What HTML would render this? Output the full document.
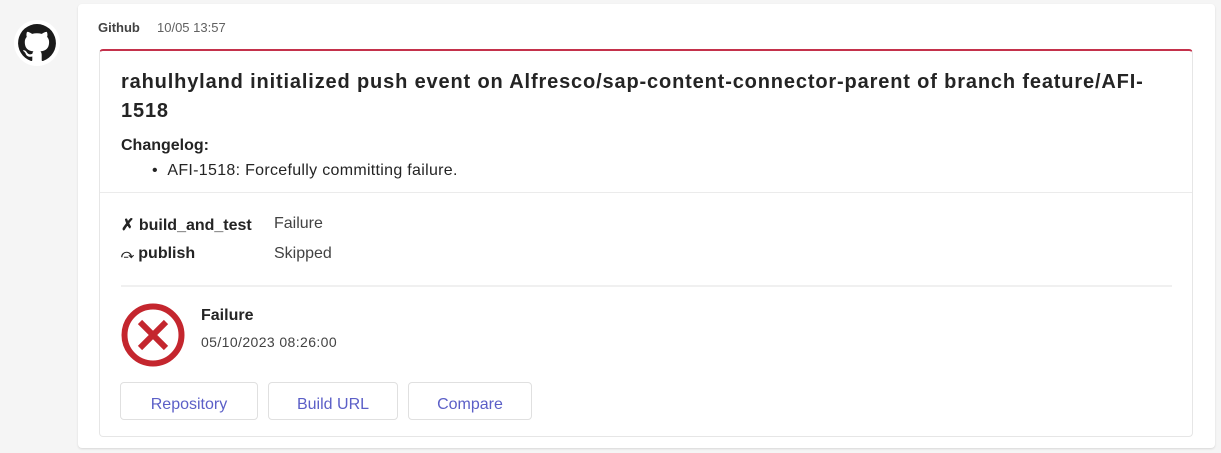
<!DOCTYPE html>
<html><head><style>
body{margin:0;width:1221px;height:453px;background:#f5f5f5;font-family:"Liberation Sans",sans-serif;position:relative;overflow:hidden;color:#242424}
.msg{position:absolute;left:78px;top:4px;width:1137px;height:444px;background:#fff;border-radius:4px;box-shadow:0 1px 2px rgba(0,0,0,.12)}
.card{position:absolute;left:99px;top:49px;width:1094px;height:388px;background:#fff;border:1px solid #e6e6e6;border-top:2px solid #c4314b;border-radius:4px;box-sizing:border-box}
.t{position:absolute;white-space:nowrap}
.btn{position:absolute;top:382px;height:38px;border:1px solid #e0e0e0;border-radius:4px;box-sizing:border-box;color:#5b5fc7;font-size:16px;text-align:center;line-height:43px;background:#fff}
</style></head><body>
<svg style="position:absolute;left:14px;top:20px" width="46" height="46" viewBox="0 0 46 46">
<circle cx="23" cy="23" r="23" fill="#fff"/>
<path fill="#1b1b1b" d="M23 4a19 19 0 0 0-6 37c1 .2 1.3-.4 1.3-1v-3.5c-5.3 1.2-6.4-2.3-6.4-2.3-.9-2.2-2.1-2.8-2.1-2.8-1.700-1.2.1-1.1.1-1.1 1.9.1 2.9 2 2.9 2 1.7 2.9 4.4 2 5.5 1.6.2-1.2.7-2 1.2-2.5-4.2-.5-8.7-2.1-8.7-9.4 0-2.1.7-3.8 2-5.1-.2-.5-.8-2.4.2-5 0 0 1.6-.5 5.2 2a18 18 0 0 1 9.5 0c3.6-2.5 5.2-2 5.2-2 1 2.6.4 4.5.2 5 1.2 1.3 2 3 2 5.1 0 7.3-4.5 8.9-8.700 9.4.7.6 1.3 1.8 1.3 3.5V40c0 .6.3 1.2 1.3 1A19 19 0 0 0 23 4z"/>
</svg>
<div class="msg"></div>
<div class="t" style="left:98px;top:20px;font-size:13px;font-weight:bold;color:#424242">Github</div>
<div class="t" style="left:157px;top:20px;font-size:13px;color:#616161">10/05 13:57</div>
<div class="card"></div>
<div class="t" style="left:121px;top:68px;font-size:20px;font-weight:bold;color:#242424;line-height:29px;letter-spacing:0.85px">rahulhyland initialized push event on Alfresco/sap-content-connector-parent of branch feature/AFI-<br>1518</div>
<div class="t" style="left:121px;top:137px;font-size:16px;font-weight:bold">Changelog:</div>
<div class="t" style="left:152px;top:162px;font-size:16px;letter-spacing:0.3px">•&nbsp;&nbsp;AFI-1518: Forcefully committing failure.</div>
<div style="position:absolute;left:100px;top:192px;width:1092px;height:1px;background:#ebebeb"></div>
<div class="t" style="left:121px;top:215px;font-size:16px;font-weight:bold">✗ build_and_test</div>
<div class="t" style="left:274px;top:215px;font-size:16px;color:#424242">Failure</div>
<div class="t" style="left:121px;top:245px;font-size:16px;font-weight:bold"><span style="font-size:12px">⤼</span> publish</div>
<div class="t" style="left:274px;top:245px;font-size:16px;color:#424242">Skipped</div>
<div style="position:absolute;left:121px;top:285px;width:1051px;height:2px;background:#f0f0f0"></div>
<svg style="position:absolute;left:120px;top:302px" width="66" height="66" viewBox="0 0 66 66">
<circle cx="33" cy="33" r="28.5" fill="none" stroke="#c4262e" stroke-width="6"/>
<path d="M20 20L46 46M46 20L20 46" stroke="#c4262e" stroke-width="6"/>
</svg>
<div class="t" style="left:201px;top:307px;font-size:16px;font-weight:bold">Failure</div>
<div class="t" style="left:201px;top:334px;font-size:14px;color:#424242;letter-spacing:0.4px">05/10/2023 08:26:00</div>
<div class="btn" style="left:120px;width:138px">Repository</div>
<div class="btn" style="left:268px;width:130px">Build URL</div>
<div class="btn" style="left:408px;width:124px">Compare</div>
</body></html>
